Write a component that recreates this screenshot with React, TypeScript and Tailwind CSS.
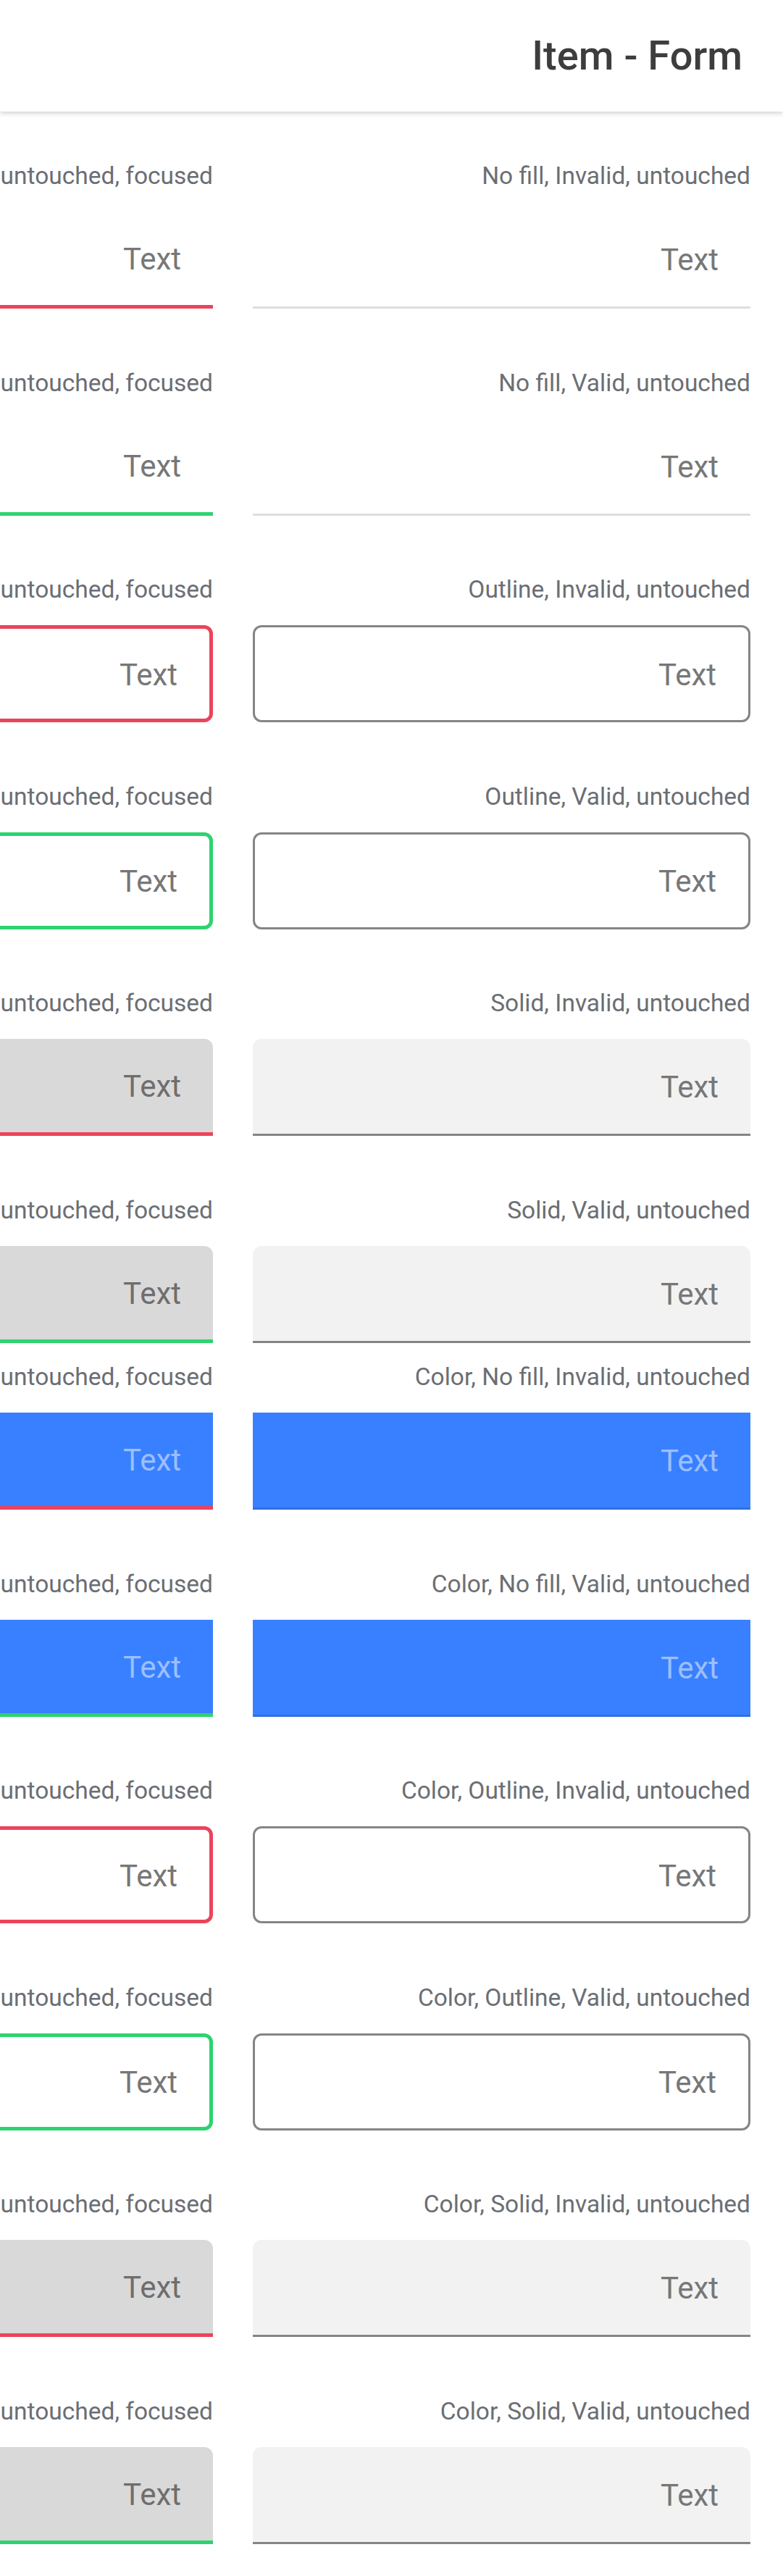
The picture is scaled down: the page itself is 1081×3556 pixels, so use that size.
import React from "react"

type Kind = "nofill" | "outline" | "solid" | "color"
type State = "invalid" | "valid"

type Row = {
    name: string
    kind: Kind
    state: State
}

const ROWS: Row[] = [
    { name: "No fill, Invalid", kind: "nofill", state: "invalid" },
    { name: "No fill, Valid", kind: "nofill", state: "valid" },
    { name: "Outline, Invalid", kind: "outline", state: "invalid" },
    { name: "Outline, Valid", kind: "outline", state: "valid" },
    { name: "Solid, Invalid", kind: "solid", state: "invalid" },
    { name: "Solid, Valid", kind: "solid", state: "valid" },
    { name: "Color, No fill, Invalid", kind: "color", state: "invalid" },
    { name: "Color, No fill, Valid", kind: "color", state: "valid" },
    { name: "Color, Outline, Invalid", kind: "outline", state: "invalid" },
    { name: "Color, Outline, Valid", kind: "outline", state: "valid" },
    { name: "Color, Solid, Invalid", kind: "solid", state: "invalid" },
    { name: "Color, Solid, Valid", kind: "solid", state: "valid" },
]

// untouched box styles (right column)
const IDLE: Record<Kind, { box: string; text: string }> = {
    nofill:  { box: "border-b-[3px] border-[#dedede] pr-[44px]", text: "text-[#777777]" },
    outline: { box: "border-[3px] border-[#858585] rounded-[12px] pr-[44px]", text: "text-[#777777]" },
    solid:   { box: "bg-[#f2f2f2] rounded-t-[12px] border-b-[3px] border-[#858585] pr-[44px]", text: "text-[#777777]" },
    color:   { box: "bg-[#3880ff] border-b-[3px] border-[#3171e0] pr-[44px]", text: "text-[#9cbfff]" },
}

// focused box styles (left column)
const FOCUSED: Record<Kind, Record<State, string>> = {
    nofill: {
        invalid: "border-b-[5px] border-[#eb445a] pr-[44px]",
        valid: "border-b-[5px] border-[#2dd36f] pr-[44px]",
    },
    outline: {
        invalid: "border-[5px] border-[#eb445a] rounded-[12px] pr-[44px]",
        valid: "border-[5px] border-[#2dd36f] rounded-[12px] pr-[44px]",
    },
    solid: {
        invalid: "bg-[#d9d9d9] rounded-t-[12px] border-b-[5px] border-[#eb445a] pr-[44px]",
        valid: "bg-[#d9d9d9] rounded-t-[12px] border-b-[5px] border-[#2dd36f] pr-[44px]",
    },
    color: {
        invalid: "bg-[#3880ff] border-b-[5px] border-[#eb445a] pr-[44px]",
        valid: "bg-[#3880ff] border-b-[5px] border-[#2dd36f] pr-[44px]",
    },
}

function Field({ label, box, text }: { label: string; box: string; text: string }) {
    return (
        <div className="w-[687px] shrink-0 flex flex-col">
            <div className="text-[33.5px] leading-[40px] text-[#6b6e73] whitespace-nowrap">
                {label}
            </div>
            <div className={`mt-[29px] h-[134px] flex items-center ${box}`}>
                <span className={`text-[42px] leading-none pt-[3px] ${text}`}>Text</span>
            </div>
        </div>
    )
}

function FieldRow({ row, className }: { row: Row; className?: string }) {
    const idle = IDLE[row.kind]
    const focusedText = row.kind === "color"
        ? "text-[#9cbfff]"
        : row.kind === "solid" ? "text-[#6e6e6e]" : "text-[#777777]"

    return (
        <div className={`flex gap-[55px] pr-[45px] ${className ?? ""}`}>
            {/* untouched */}
            <Field label={`${row.name}, untouched`} box={idle.box} text={idle.text} />
            {/* focused, runs off the left edge like the original page */}
            <Field
                label={`${row.name}, untouched, focused`}
                box={FOCUSED[row.kind][row.state]}
                text={focusedText}
            />
        </div>
    )
}

export default function App() {
    return (
        <div dir="rtl" className="w-[1081px] min-h-[3556px] bg-white overflow-hidden font-['Roboto',sans-serif]">
            {/* Header */}
            <header className="relative z-10 h-[154px] bg-white flex items-center pr-[56px] shadow-[0_3px_6px_rgba(0,0,0,0.16)]">
                <h1 className="text-[56px] font-medium text-[#3d3d3d] leading-none">Item - Form</h1>
            </header>

            {/* Rows */}
            <main className="pt-[69px] pb-[44px] flex flex-col">
                {ROWS.map((row, i) => (
                    <FieldRow
                        key={row.name}
                        row={row}
                        className={i === 0 ? "" : i === 6 ? "mt-[27.5px]" : "mt-[82.5px]"}
                    />
                ))}
            </main>
        </div>
    )
}
